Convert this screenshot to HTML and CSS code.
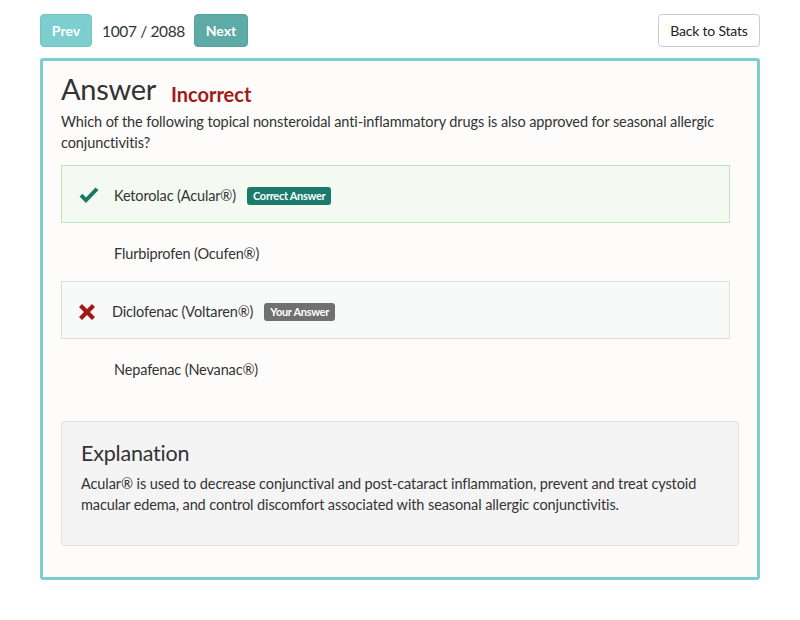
FILE: index.html
```html
<!DOCTYPE html>
<html>
<head>
<meta charset="utf-8">
<link rel="stylesheet" href="styles.css">
</head>
<body>
<div class="page">
  <div class="topbar">
    <div class="nav">
      <button class="btn btn-prev">Prev</button>
      <span class="counter">1007 / 2088</span>
      <button class="btn btn-next">Next</button>
    </div>
    <button class="btn btn-back">Back to Stats</button>
  </div>
  <div class="card">
    <div class="title-row">
      <h1 class="title">Answer</h1>
      <span class="status">Incorrect</span>
    </div>
    <p class="question">Which of the following topical nonsteroidal anti-inflammatory drugs is also approved for seasonal allergic conjunctivitis?</p>
    <div class="options">
      <div class="option correct">
        <span class="icon"><svg width="22" height="18" viewBox="0 0 22 18"><path d="M1.5 9.5 L8 16 L20.5 3 L17.5 0.5 L8 10.5 L4.5 6.8 Z" fill="#1d7666"/></svg></span>
        <span class="label">Ketorolac (Acular®)</span>
        <span class="badge badge-correct">Correct Answer</span>
      </div>
      <div class="option plain">
        <span class="icon"></span>
        <span class="label">Flurbiprofen (Ocufen®)</span>
      </div>
      <div class="option wrong">
        <span class="icon"><svg width="18" height="18" viewBox="0 0 18 18"><path d="M1 4 L4 1 L9 6 L14 1 L17 4 L12 9 L17 14 L14 17 L9 12 L4 17 L1 14 L6 9 Z" fill="#a01818"/></svg></span>
        <span class="label">Diclofenac (Voltaren®)</span>
        <span class="badge badge-yours">Your Answer</span>
      </div>
      <div class="option plain">
        <span class="icon"></span>
        <span class="label">Nepafenac (Nevanac®)</span>
      </div>
    </div>
    <div class="explanation">
      <h2 class="exp-title">Explanation</h2>
      <p class="exp-text">Acular® is used to decrease conjunctival and post-cataract inflammation, prevent and treat cystoid macular edema, and control discomfort associated with seasonal allergic conjunctivitis.</p>
    </div>
  </div>
</div>
</body>
</html>
```

FILE: styles.css
```css
* { box-sizing: border-box; }
html, body { margin: 0; padding: 0; background: #ffffff; }
body {
  font-family: "Lato", "Open Sans", sans-serif;
  color: #333333;
}
.page {
  width: 720px;
  margin-left: 40px;
  padding-top: 14px;
}
.topbar {
  display: flex;
  justify-content: space-between;
  align-items: center;
  height: 33px;
}
.nav {
  display: flex;
  align-items: center;
}
.btn {
  font-family: "Lato", sans-serif;
  height: 33px;
  border-radius: 4px;
  font-size: 14px;
  cursor: pointer;
  padding: 0 12px;
}
.btn-prev {
  width: 52px;
  background: #7dcfcf;
  border: 1px solid #72c4c4;
  color: #ffffff;
  font-weight: 700;
  padding: 0;
}
.btn-next {
  width: 54px;
  background: #5eaaa7;
  border: 1px solid #56a09d;
  color: #ffffff;
  font-weight: 700;
  padding: 0;
}
.counter {
  font-size: 15.5px;
  color: #333;
  margin: 0 10px;
  width: 82px;
  white-space: nowrap;
  flex: none;
  letter-spacing: -0.35px;
}
.btn-back {
  width: 102px;
  background: #ffffff;
  border: 1px solid #cccccc;
  color: #222;
  padding: 0;
  letter-spacing: -0.2px;
}
.card {
  margin-top: 11px;
  border: 3px solid #7dcfcf;
  border-radius: 3px;
  background: #fdfcfb;
  padding: 10px 18px 31px 18px;
}
.title-row {
  display: flex;
  align-items: flex-end;
  height: 36px;
}
.title {
  margin: 0;
  font-size: 29px;
  font-weight: 400;
  color: #333;
  line-height: 36px;
  letter-spacing: -0.3px;
}
.status {
  margin-left: 15px;
  font-size: 20px;
  font-weight: 700;
  color: #a01a1a;
  line-height: 20px;
  margin-bottom: 3px;
}
.question {
  margin: 4px 0 0 0;
  font-size: 14.5px;
  line-height: 21px;
  color: #333;
  letter-spacing: -0.1px;
}
.options {
  margin-top: 12px;
  margin-right: 9px;
}
.option {
  display: flex;
  align-items: center;
  height: 58px;
  border: 1px solid transparent;
  font-size: 14.5px;
  letter-spacing: -0.15px;
  padding-top: 3px;
}
.option.correct {
  background: #f4faf2;
  border-color: #bfe5bb;
}
.option.wrong {
  background: #f8f9f9;
  border-color: #dcdcdc;
}
.icon {
  width: 52px;
  padding-left: 16px;
  display: flex;
  align-items: center;
}
.option.wrong .icon { padding-left: 16px; width: 50px; }
.badge {
  margin-left: 11px;
  font-size: 11px;
  font-weight: 700;
  color: #fff;
  padding: 0 6px;
  height: 18px;
  border-radius: 3px;
  line-height: 18px;
  letter-spacing: -0.3px;
}
.badge-correct { background: #1a7a6b; }
.badge-yours { background: #707070; }
.explanation {
  margin-top: 24px;
  background: #f4f4f4;
  border: 1px solid #e0e0e0;
  border-radius: 4px;
  padding: 17px 19px 30px 19px;
}
.exp-title {
  margin: 0;
  font-size: 21.5px;
  font-weight: 400;
  color: #333;
  line-height: 28px;
  letter-spacing: -0.2px;
}
.exp-text {
  margin: 6px 0 0 0;
  font-size: 14.5px;
  line-height: 21px;
  color: #333;
  letter-spacing: -0.1px;
}
```
